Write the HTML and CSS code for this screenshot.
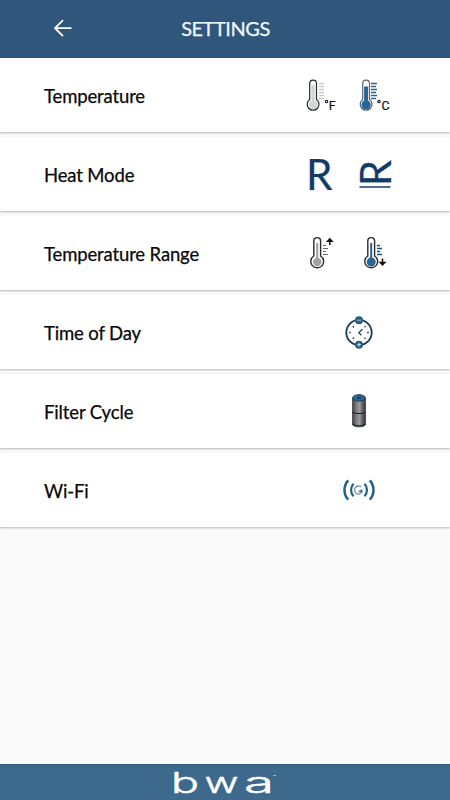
FILE: index.html
```html
<!DOCTYPE html>
<html lang="en">
<head>
<meta charset="utf-8">
<title>Settings</title>
<link rel="stylesheet" href="styles.css">
</head>
<body>
<header class="header">
  <svg class="back" width="20" height="20" viewBox="0 0 20 20" fill="none" stroke="#fff" stroke-width="1.8"><path d="M10 1.2 2 9.2l8 8M2.5 9.2H18.5"/></svg>
  <h1 class="title">SETTINGS</h1>
</header>
<main class="list">
  <section class="row">
    <span class="label">Temperature</span>
    <svg class="icons" width="120" height="60" viewBox="0 0 120 60">
      <path d="M19.7 33.5V17.5a3.4 3.4 0 0 1 6.8 0v16a5.9 5.9 0 1 1-6.8 0z" fill="#fff" stroke="#25282c" stroke-width="1.2"/>
      <path d="M21.4 34.5V19h3.4v15.5a4.5 4.5 0 1 1-3.4 0z" fill="#d5d5d5"/>
      <path d="M29 17.5h5M29 20.5h5M29 23.5h5M29 26.5h5M29 29.5h5M29 32.5h5" stroke="#ccc" stroke-width="1.3"/>
      <circle cx="36.5" cy="35.5" r="1.2" fill="none" stroke="#111" stroke-width="1.1"/>
      <text class="unit" x="38.7" y="43.5">F</text>
      <path d="M72.7 33.5V17.5a3.4 3.4 0 0 1 6.8 0v16a5.9 5.9 0 1 1-6.8 0z" fill="#fff" stroke="#5f6265" stroke-width="1.2"/>
      <path d="M74.1 34.5V20.5h4v14a4.7 4.7 0 1 1-4 0z" fill="#286699"/>
      <path d="M81 17.5h6M81 20.5h5M81 23.5h6M81 26.5h5M81 29.5h6M81 32.5h5" stroke="#315f86" stroke-width="1.3"/>
      <circle cx="89" cy="35.5" r="1.2" fill="none" stroke="#111" stroke-width="1.1"/>
      <text class="unit" x="91.5" y="43.5">C</text>
    </svg>
  </section>
  <section class="row">
    <span class="label">Heat Mode</span>
    <svg class="icons" width="120" height="60" viewBox="0 0 120 60">
      <text class="mode" x="16" y="45" textLength="26.5" lengthAdjust="spacingAndGlyphs">R</text>
      <text class="mode" transform="translate(100.5 41) rotate(-90)" textLength="26" lengthAdjust="spacingAndGlyphs">R</text>
      <path d="M69.5 42h31" stroke="#173d64" stroke-width="1.5"/>
    </svg>
  </section>
  <section class="row">
    <span class="label">Temperature Range</span>
    <svg class="icons" width="120" height="60" viewBox="0 0 120 60">
      <g transform="translate(0 1)">
      <path d="M23.8 31V16a3.4 3.4 0 0 1 6.8 0v15a6.4 6.4 0 1 1-6.8 0z" fill="#fff" stroke="#292929" stroke-width="1.4"/>
      <path d="M27.2 18v15" stroke="#9b9b9b" stroke-width="2"/><circle cx="27.2" cy="37" r="4.2" fill="#a3a3a3"/>
      <path d="M33 20.5h3M33 23.5h5M33 26.5h3M33 29.5h5" stroke="#666"/>
      <path d="M39.8 20v-5M37.5 16.2l2.3-2.4 2.3 2.4z" stroke="#111" stroke-width="1.5" fill="#111"/>
      <path d="M77.8 31V16a3.4 3.4 0 0 1 6.8 0v15a6.4 6.4 0 1 1-6.8 0z" fill="#fff" stroke="#292929" stroke-width="1.4"/>
      <path d="M81.2 18v15" stroke="#286090" stroke-width="2"/><circle cx="81.2" cy="37" r="4.5" fill="#286699"/>
      <path d="M87 20.5h3M87 23.5h5M87 26.5h3M87 29.5h5" stroke="#215079" stroke-width="1.3"/>
      <path d="M92.5 33.5v5M90.2 37.5l2.3 2.4 2.3-2.4z" stroke="#111" stroke-width="1.5" fill="#111"/>
      </g>
    </svg>
  </section>
  <section class="row">
    <span class="label">Time of Day</span>
    <svg class="icons" width="120" height="60" viewBox="0 0 120 60">
      <g transform="translate(0 2)">
      <circle cx="69" cy="27.5" r="12.7" fill="#fff" stroke="#1b3b55" stroke-width="1.8"/>
      <circle cx="69" cy="15.2" r="4" fill="#275c83"/><path d="M66.8 15.2h4.4" stroke="#a2bfd2"/>
      <circle cx="69" cy="39.7" r="4" fill="#275c83"/><path d="M67 39.7h4M69 37.7v4" stroke="#d5e4ed"/>
      <path d="m72.5 24-3.7 3.7 2.6 2.6" fill="none" stroke="#25465f" stroke-width="1.3"/>
      <path d="M59.2 27.5h1.6M77.2 27.5h1.6M62.8 21.4l1.2 1M62.8 33.6l1.2-1M74.5 22.2l1-1M74.5 32.8l1 1" stroke="#28343f" stroke-width="1.4"/>
      </g>
    </svg>
  </section>
  <section class="row">
    <span class="label">Filter Cycle</span>
    <svg class="icons" width="120" height="60" viewBox="0 0 120 60">
      <defs><linearGradient id="metal"><stop stop-color="#404246"/><stop offset=".3" stop-color="#7d7e81"/><stop offset=".55" stop-color="#999"/><stop offset=".8" stop-color="#56585b"/><stop offset="1" stop-color="#35383c"/></linearGradient></defs>
      <g transform="translate(0 2.5)">
      <path d="M62.5 13.5v26c0 4 13 4 13 0v-26z" fill="url(#metal)" stroke="#333538" stroke-width=".7"/>
      <path d="M62.5 27.5c1 2 12 2 13 0M62.5 39c1 3 12 3 13 0" fill="none" stroke="#202429" stroke-width="1.2"/>
      <ellipse cx="69" cy="13.4" rx="6.4" ry="3.2" fill="#286a95" stroke="#26394a"/>
      <ellipse cx="69" cy="13.4" rx="2.5" ry="1.2" fill="#184366"/>
      </g>
    </svg>
  </section>
  <section class="row">
    <span class="label">Wi-Fi</span>
    <svg class="icons" width="120" height="60" viewBox="0 0 120 60" fill="none">
      <g transform="translate(0 2)">
      <path d="M58.2 17.3a14.5 14.5 0 0 0 0 19.4M79.8 17.3a14.5 14.5 0 0 1 0 19.4" stroke="#246085" stroke-width="2.5"/>
      <path d="M63.5 20.7a9.3 9.3 0 0 0 0 12.6M74.5 20.7a9.3 9.3 0 0 1 0 12.6" stroke="#246085" stroke-width="2.2"/>
      <path d="M71.2 24a4 4 0 1 0 1 4.5h-3.5" stroke="#6794af" stroke-width="1.3"/>
      <path d="m68.5 28 4.3-2-1.4 3.5z" fill="#326e94"/>
      </g>
    </svg>
  </section>
</main>
<footer class="footer">
  <svg class="brand" width="110" height="36" viewBox="0 0 110 36" role="img">
    <text x="-1" y="28.5" textLength="28" lengthAdjust="spacingAndGlyphs">b</text>
    <text x="32.5" y="28.5" textLength="34" lengthAdjust="spacingAndGlyphs">w</text>
    <text x="72" y="28.5" textLength="30" lengthAdjust="spacingAndGlyphs">a</text>
    <text class="tm" x="101" y="15">™</text>
  </svg>
</footer>
</body>
</html>
```
FILE: styles.css
```css
* { box-sizing: border-box; }
body { margin: 0; height: 800px; display: flex; flex-direction: column; overflow: hidden; background: #fafafa; font-family: Lato, sans-serif; color: #080808; }
.header { height: 58px; flex: none; background: #30567b; border-bottom: 1px solid #284b6e; display: grid; grid-template-columns: 53px 1fr 53px; align-items: center; }
.back { justify-self: end; margin-right: -20px; }
.title { margin: -2px 0 0 1px; text-align: center; color: #edf9ff; font-size: 20px; line-height: 24px; font-weight: 400; letter-spacing: -.45px; -webkit-text-stroke: .25px #edf9ff; }
.list { flex: 1; display: flex; flex-direction: column; gap: 5px; }
.row { height: 74px; flex: none; display: flex; align-items: center; justify-content: space-between; padding: 2px 40px 0 44px; background: #fff; box-shadow: 0 1px 2px #b5b5b5; }
.label { font-size: 18.5px; line-height: 24px; letter-spacing: -.14px; -webkit-text-stroke: .25px #080808; }
.icons { display: block; }
.unit { font: 12.5px Roboto, sans-serif; fill: #111; stroke: #111; stroke-width: .2px; }
.mode { font: 43px Lato, sans-serif; fill: #123b66; stroke: #123b66; stroke-width: .2px; }
.footer { height: 36px; flex: none; background: #3d698d; border-top: 1px solid #335d80; display: flex; justify-content: center; }
.brand { margin: -1px 0 0 3px; font: 300 28px Inter, sans-serif; fill: #fff; stroke: #fff; stroke-width: .5px; stroke-linejoin: round; }
.tm { font-size: 5px; stroke: none; }
```
